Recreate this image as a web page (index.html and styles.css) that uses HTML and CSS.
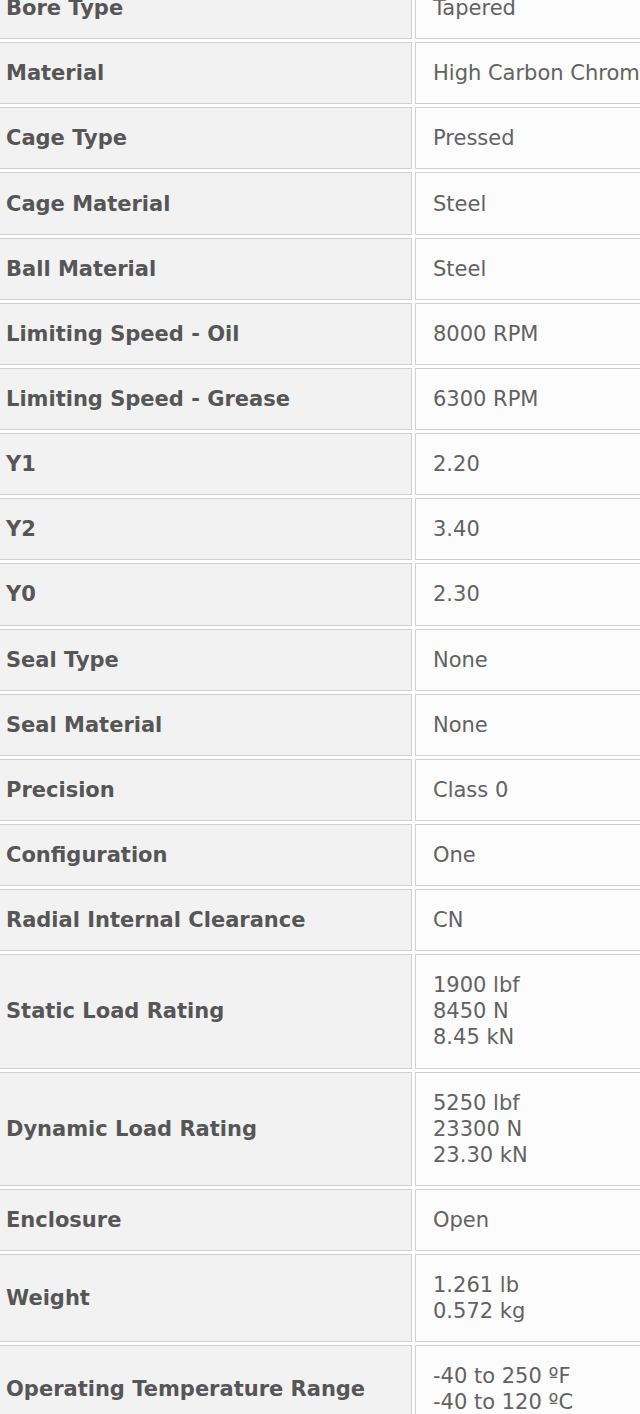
FILE: index.html
```html
<!DOCTYPE html>
<html>
<head>
<meta charset="utf-8">
<link rel="stylesheet" href="styles.css">
</head>
<body>
<div class="viewport">
<table class="specs">
<colgroup><col class="col-label"><col class="col-value"></colgroup>
<tbody>
<tr><th>Bore Type</th><td>Tapered</td></tr>
<tr><th>Material</th><td>High Carbon Chrome Steel</td></tr>
<tr><th>Cage Type</th><td>Pressed</td></tr>
<tr><th>Cage Material</th><td>Steel</td></tr>
<tr><th>Ball Material</th><td>Steel</td></tr>
<tr><th>Limiting Speed - Oil</th><td>8000 RPM</td></tr>
<tr><th>Limiting Speed - Grease</th><td>6300 RPM</td></tr>
<tr><th>Y1</th><td>2.20</td></tr>
<tr><th>Y2</th><td>3.40</td></tr>
<tr><th>Y0</th><td>2.30</td></tr>
<tr><th>Seal Type</th><td>None</td></tr>
<tr><th>Seal Material</th><td>None</td></tr>
<tr><th>Precision</th><td>Class 0</td></tr>
<tr><th>Configuration</th><td>One</td></tr>
<tr><th>Radial Internal Clearance</th><td>CN</td></tr>
<tr><th>Static Load Rating</th><td>1900 lbf<br>8450 N<br>8.45 kN</td></tr>
<tr><th>Dynamic Load Rating</th><td>5250 lbf<br>23300 N<br>23.30 kN</td></tr>
<tr><th>Enclosure</th><td>Open</td></tr>
<tr><th>Weight</th><td>1.261 lb<br>0.572 kg</td></tr>
<tr><th>Operating Temperature Range</th><td>-40 to 250 ºF<br>-40 to 120 ºC</td></tr>
</tbody>
</table>
</div>
</body>
</html>
```
FILE: styles.css
```css
html, body {
  margin: 0;
  padding: 0;
  background: #ffffff;
}

.viewport {
  width: 640px;
  height: 1414px;
  overflow: hidden;
  position: relative;
}

.specs {
  width: 866px;
  table-layout: fixed;
  margin-top: -26px;
  margin-left: -15px;
  border-collapse: separate;
  border-spacing: 3px;
  font-family: "DejaVu Sans", Verdana, sans-serif;
  font-size: 21px;
  line-height: 26px;
}

.col-label {
  width: 424px;
}

.col-value {
  width: 433px;
}

.specs th,
.specs td {
  box-sizing: border-box;
  border: 1px solid #d0d0d0;
  padding: 17.08px 17px;
  vertical-align: middle;
  text-align: left;
  white-space: nowrap;
  overflow: hidden;
}

.specs th {
  background: #f2f2f2;
  color: #565656;
  font-weight: bold;
}

.specs td {
  background: #fcfcfc;
  color: #626262;
  font-weight: normal;
}
```
